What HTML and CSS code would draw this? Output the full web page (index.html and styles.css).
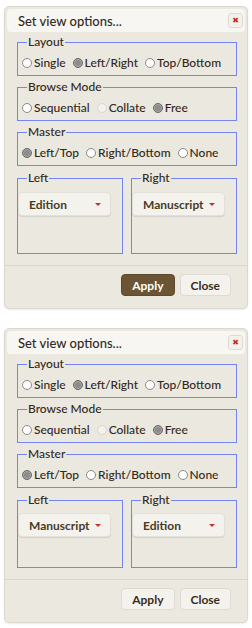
FILE: index.html
```html
<!DOCTYPE html>
<html lang="en">

<head>
	<meta charset="UTF-8">
	<title>Set view options</title>
	<link rel="stylesheet" href="styles.css">
</head>

<body>
	<div class="dialog">
		<div class="titlebar">
			<span class="title">Set view options...</span>
			<span class="close">&#x2716;</span>
		</div>
		<div class="content">
			<fieldset>
				<legend>Layout</legend>
				<div class="row">
					<label><input type="radio" name="layout1"> Single</label>
					<label><input type="radio" name="layout1" checked> Left/Right</label>
					<label><input type="radio" name="layout1"> Top/Bottom</label>
				</div>
			</fieldset>
			<fieldset>
				<legend>Browse Mode</legend>
				<div class="row">
					<label><input type="radio" name="mode1"> Sequential</label>
					<label><input type="radio" name="mode1" disabled> Collate</label>
					<label><input type="radio" name="mode1" checked> Free</label>
				</div>
			</fieldset>
			<fieldset>
				<legend>Master</legend>
				<div class="row">
					<label><input type="radio" name="master1" checked> Left/Top</label>
					<label><input type="radio" name="master1"> Right/Bottom</label>
					<label><input type="radio" name="master1"> None</label>
				</div>
			</fieldset>
			<div class="panes">
				<fieldset class="pane">
					<legend>Left</legend>
					<div class="pane-body">
						<span class="select">Edition<i class="caret"></i></span>
					</div>
				</fieldset>
				<fieldset class="pane">
					<legend>Right</legend>
					<div class="pane-body">
						<span class="select">Manuscript<i class="caret"></i></span>
					</div>
				</fieldset>
			</div>
		</div>
		<div class="buttons">
			<button class="btn primary">Apply</button>
			<button class="btn">Close</button>
		</div>
	</div>

	<div class="dialog">
		<div class="titlebar">
			<span class="title">Set view options...</span>
			<span class="close">&#x2716;</span>
		</div>
		<div class="content">
			<fieldset>
				<legend>Layout</legend>
				<div class="row">
					<label><input type="radio" name="layout2"> Single</label>
					<label><input type="radio" name="layout2" checked> Left/Right</label>
					<label><input type="radio" name="layout2"> Top/Bottom</label>
				</div>
			</fieldset>
			<fieldset>
				<legend>Browse Mode</legend>
				<div class="row">
					<label><input type="radio" name="mode2"> Sequential</label>
					<label><input type="radio" name="mode2" disabled> Collate</label>
					<label><input type="radio" name="mode2" checked> Free</label>
				</div>
			</fieldset>
			<fieldset>
				<legend>Master</legend>
				<div class="row">
					<label><input type="radio" name="master2" checked> Left/Top</label>
					<label><input type="radio" name="master2"> Right/Bottom</label>
					<label><input type="radio" name="master2"> None</label>
				</div>
			</fieldset>
			<div class="panes short">
				<fieldset class="pane">
					<legend>Left</legend>
					<div class="pane-body">
						<span class="select">Manuscript<i class="caret"></i></span>
					</div>
				</fieldset>
				<fieldset class="pane">
					<legend>Right</legend>
					<div class="pane-body">
						<span class="select">Edition<i class="caret"></i></span>
					</div>
				</fieldset>
			</div>
		</div>
		<div class="buttons">
			<button class="btn">Apply</button>
			<button class="btn">Close</button>
		</div>
	</div>
</body>

</html>
```

FILE: styles.css
```css
body {
	margin: 0;
	padding: 6px 4px 0 4px;
	background: #fff;
	color: #33281a;
	font-family: Lato, "Liberation Sans", sans-serif;
	font-size: 12px;
	font-weight: 500;
}

.dialog {
	width: 242px;
	margin-bottom: 19px;
	padding: 2px 0 0 0;
	background: #ebe8e0;
	border: 1px solid #dcd8cf;
	border-radius: 5px;
	box-shadow: 0 1px 2px #00000014;
}

.titlebar {
	display: flex;
	align-items: center;
	justify-content: space-between;
	height: 23px;
	margin: 0 2px;
	padding: 0 2px 0 11px;
	background: #f7f6f2;
	border-radius: 4px;
}
.title {
	font-size: 13px;
	color: #33291d;
}
.close {
	display: flex;
	align-items: center;
	justify-content: center;
	width: 13px;
	height: 13px;
	border: 1px solid #dedad2;
	border-radius: 3px;
	background: #f3f1ec;
	color: #c0301e;
	font-family: "DejaVu Sans", sans-serif;
	font-size: 8px;
	font-weight: bold;
}

.content {
	padding: 3px 10px 0 12px;
}

fieldset {
	margin: 0 0 4px 0;
	padding: 5px 0 4px 0;
	border: 1px solid #7584f3;
}
legend {
	margin-left: 9px;
	padding: 0 1px;
	line-height: 14px;
}

.row {
	display: flex;
	align-items: center;
	gap: 7px;
	padding-left: 4px;
	line-height: 17px;
}
.row label {
	display: flex;
	align-items: center;
	gap: 2px;
}
input[type=radio] {
	appearance: none;
	-webkit-appearance: none;
	width: 10px;
	height: 10px;
	margin: 0;
	border: 1px solid #8a8a8a;
	border-radius: 50%;
	background: #fff;
}
input[type=radio]:checked {
	background: #8c8c8c;
	border-color: #6a6a6a;
	box-shadow: inset 0 0 0 1px #a8a8a8;
}
input[type=radio]:disabled {
	border-color: #d9d6cf;
	background: #f3f1ec;
}

.panes {
	display: grid;
	grid-template-columns: 1fr 1fr;
	gap: 8px;
	margin-top: 5px;
}
.pane {
	margin: 0;
	padding: 7px 0 0 0;
}
.pane-body {
	height: 61px;
}
.short .pane {
	padding-top: 6px;
}
.short .pane-body {
	height: 54px;
}

.select {
	display: flex;
	align-items: center;
	justify-content: space-between;
	box-sizing: border-box;
	width: 93px;
	height: 24px;
	padding: 0 9px 0 10px;
	background: #f4f2ed;
	border: 1px solid #e3e0d8;
	border-radius: 4px;
	box-shadow: 0 1px 1px #0000001a;
	color: #4a3a1f;
	font-weight: bold;
}
.caret {
	width: 0;
	height: 0;
	border-left: 3px solid transparent;
	border-right: 3px solid transparent;
	border-top: 3px solid #c4302a;
}

.buttons {
	display: flex;
	justify-content: flex-end;
	gap: 5px;
	margin-top: 11px;
	padding: 8px 16px 12px 0;
	border-top: 1px solid #dad6cd;
}
.btn {
	height: 22px;
	padding: 0 10px;
	background: #f4f2ed;
	border: 1px solid #dedad2;
	border-radius: 4px;
	color: #3a2e1c;
	font-family: Lato, "Liberation Sans", sans-serif;
	font-size: 12px;
	font-weight: bold;
}
.btn.primary {
	background: #6b5534;
	border-color: #5d4a2d;
	color: #fff;
}
```
